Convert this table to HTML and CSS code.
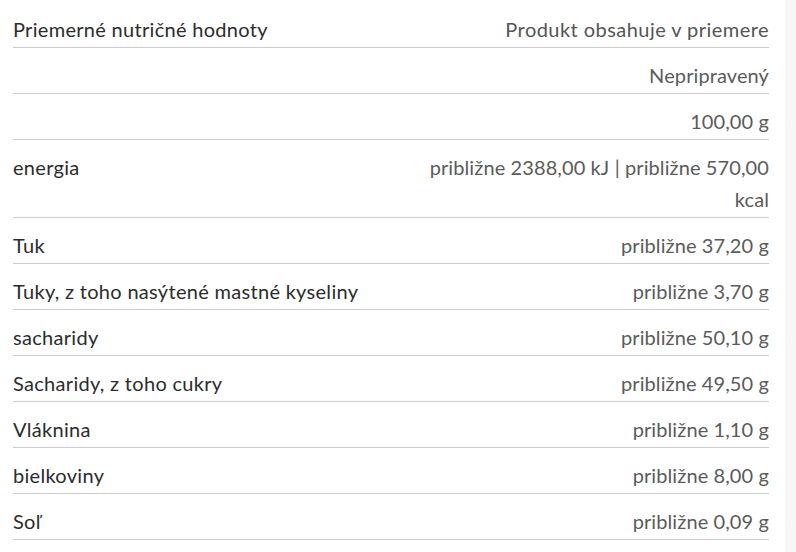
FILE: index.html
```html
<!DOCTYPE html>
<html lang="sk">
<head>
<meta charset="utf-8">
<title>Priemerné nutričné hodnoty</title>
<link rel="stylesheet" href="styles.css">
</head>
<body>
<div class="page">
  <main class="content">
    <div class="nutri">
      <div class="row head"><div class="label">Priemerné nutričné hodnoty</div><div class="value">Produkt obsahuje v priemere</div></div>
      <div class="row"><div class="label"></div><div class="value">Nepripravený</div></div>
      <div class="row"><div class="label"></div><div class="value">100,00 g</div></div>
      <div class="row"><div class="label">energia</div><div class="value">približne 2388,00 kJ | približne 570,00 kcal</div></div>
      <div class="row"><div class="label">Tuk</div><div class="value">približne 37,20 g</div></div>
      <div class="row"><div class="label">Tuky, z toho nasýtené mastné kyseliny</div><div class="value">približne 3,70 g</div></div>
      <div class="row"><div class="label">sacharidy</div><div class="value">približne 50,10 g</div></div>
      <div class="row"><div class="label">Sacharidy, z toho cukry</div><div class="value">približne 49,50 g</div></div>
      <div class="row"><div class="label">Vláknina</div><div class="value">približne 1,10 g</div></div>
      <div class="row"><div class="label">bielkoviny</div><div class="value">približne 8,00 g</div></div>
      <div class="row"><div class="label">Soľ</div><div class="value">približne 0,09 g</div></div>
    </div>
  </main>
  <div class="track"></div>
</div>
</body>
</html>
```

FILE: styles.css
```css
html, body {
  margin: 0;
  padding: 0;
  background: #ffffff;
}
body {
  font-family: "Lato", "Noto Sans", sans-serif;
  font-size: 20px;
  letter-spacing: 0.3px;
  color: #333333;
}
.page {
  display: flex;
  height: 552px;
  overflow: hidden;
}
.content {
  flex: 1;
  padding: 2px 16px 0 13px;
}
.track {
  width: 11px;
  background: #f7f7f7;
}
.row {
  display: flex;
  justify-content: space-between;
  align-items: flex-start;
  padding: 11px 0 2px;
  line-height: 32px;
  border-bottom: 1px solid #cccccc;
}
.label {
  flex: 1 1 50%;
  color: #2c2c2c;
}
.value {
  flex: 0 1 50%;
  text-align: right;
  color: #5b5b5b;
  letter-spacing: 0.1px;
}
.head .value {
  color: #555555;
  letter-spacing: 0.45px;
}
```
